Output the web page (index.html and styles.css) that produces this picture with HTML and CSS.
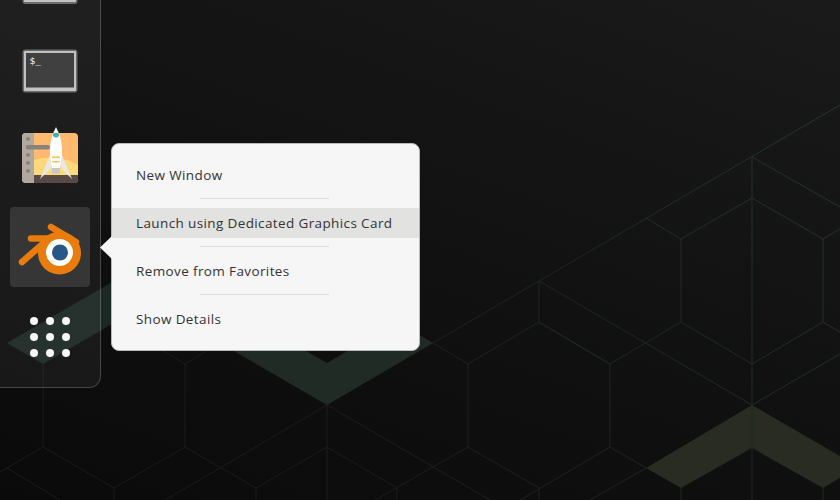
FILE: index.html
```html
<!DOCTYPE html>
<html lang="en">
<head>
  <meta charset="UTF-8" />
  <title>Desktop</title>
  <link rel="stylesheet" href="styles.css">
</head>
<body>
  <!-- Wallpaper -->
  <svg class="wallpaper" width="840" height="500" viewBox="0 0 840 500">
    <defs>
      <linearGradient id="hexLine" gradientUnits="userSpaceOnUse" x1="840" y1="100" x2="300" y2="500">
        <stop offset="0" stop-color="#223636"/>
        <stop offset="0.5" stop-color="#1c2624"/>
        <stop offset="1" stop-color="#1a1a15"/>
      </linearGradient>
    </defs>
    <polygon fill="#1c2824" points="7,343 114,281 150,302 43,364"/>
    <polygon fill="#202b26" points="327,405 433,343 397,322 327,363 256,322 220,343"/>
    <polygon fill="#282c22" points="752,405 840,456 840,478 823,488 752,448 681,488 646,468"/>
    <g class="hex-lines" stroke="url(#hexLine)">
      <path d="M433 343L840 105M646 218L681 239L752 198L823 239L840 229M752 157L840 207M752 157V500M681 239V322M823 239V322"/>
      <path d="M539 281V322M539 281L752 405M540 323L610 364L681 322L752 364L823 322L840 332M752 405L840 354M468 364L539 322L610 364M433 343L468 364V447"/>
      <path d="M610 364V447L646 468L590 500M610 447L520 500M468 447L539 488V500M681 488V500M823 488V500"/>
      <path d="M327 405V500M327 405L220 468L165 500M327 405L490 500M327 447L256 488V500M327 447L397 488V500M468 447L375 500"/>
      <path d="M150 343L185 364L220 343M185 364V447L114 488V500M185 447L256 488M43 364V447L114 488M43 447L0 472M7 468L60 500"/>
    </g>
  </svg>

  <div class="desktop">
    <!-- Dock -->
    <div class="dock">
      <div class="slot">
        <svg class="icon" viewBox="10 -57 80 80">
          <rect x="22.5" y="-40" width="55" height="44" rx="3" fill="#6c6c6c"/>
          <rect x="24" y="-38" width="52" height="40" rx="1" fill="#c2c2c2"/>
        </svg>
      </div>
      <div class="slot">
        <svg class="icon" viewBox="10 31 80 80">
          <rect x="22.5" y="49.5" width="55" height="43" rx="3" fill="#6c6c6c"/>
          <rect x="24" y="51" width="52" height="40" rx="1" fill="#c2c2c2"/>
          <rect x="26" y="53" width="48" height="34.5" fill="#404040"/>
          <text class="prompt" x="29.5" y="64">$_</text>
        </svg>
      </div>
      <div class="slot">
        <svg class="icon" viewBox="10 119 80 80">
          <rect x="22" y="133" width="56" height="50" rx="4" fill="#feba6f"/>
          <path d="M34 160Q44 157 56 158T78 165V175H34Z" fill="#fdd97b"/>
          <path d="M34 175H78V179Q78 183 74 183H34Z" fill="#5a4a45"/>
          <path d="M34 133H26Q22 133 22 137V179Q22 183 26 183H34Z" fill="#b1a89f"/>
          <rect x="26" y="145" width="24" height="4.5" rx="2" fill="#8b817c"/>
          <g fill="#8b817c">
            <circle cx="28" cy="139" r="2"/>
            <circle cx="28" cy="147" r="2"/>
            <circle cx="28" cy="155" r="2"/>
            <circle cx="28" cy="163" r="2"/>
            <circle cx="28" cy="171" r="2"/>
          </g>
          <path d="M50 155L40 179L51 168ZM62 155L72 179L61 168Z" fill="#e9e7e4"/>
          <rect x="52" y="168" width="8" height="5.5" fill="#c9c7c4"/>
          <path d="M56 127Q50 138 50 151Q50 161 52 168H60Q62 161 62 151Q62 138 56 127Z" fill="#fff"/>
          <path d="M53.4 133H58.6L59 136Q56 139 53 136Z" fill="#3fb1bd"/>
          <path d="M52 156.5H60V158H52ZM52.5 161H59.5V162.500H52.500Z" fill="#f3c04f"/>
        </svg>
      </div>
      <div class="slot slot-active">
        <svg class="icon" viewBox="10 207 80 80">
          <g fill="none" stroke="#ea7c0e" stroke-width="6.500" stroke-linecap="round">
            <path d="M51 227L76 242"/>
            <path d="M31 238.500H62"/>
            <path d="M22 262L46 241"/>
          </g>
          <circle cx="59.500" cy="253" r="21.500" fill="#ea7c0e"/>
          <circle cx="59.500" cy="252.500" r="13.500" fill="#fff"/>
          <circle cx="60" cy="252.500" r="8" fill="#265787"/>
        </svg>
      </div>
      <div class="slot slot-apps">
        <div class="app-grid">
          <span></span><span></span><span></span>
          <span></span><span></span><span></span>
          <span></span><span></span><span></span>
        </div>
      </div>
    </div>

    <!-- Context menu -->
    <div class="menu">
      <div class="menu-arrow"></div>
      <div class="menu-item">New Window</div>
      <div class="menu-sep"></div>
      <div class="menu-item hover">Launch using Dedicated Graphics Card</div>
      <div class="menu-sep"></div>
      <div class="menu-item">Remove from Favorites</div>
      <div class="menu-sep"></div>
      <div class="menu-item">Show Details</div>
    </div>
  </div>
</body>
</html>
```

FILE: styles.css
```css
* { margin: 0; padding: 0; box-sizing: border-box; }

body, html {
  width: 840px;
  height: 500px;
  overflow: hidden;
  font-family: 'Open Sans', 'Noto Sans', sans-serif;
  background: linear-gradient(20deg, #0a0a0a, #111111 50%, #1a1a1a);
}

.wallpaper {
  position: absolute;
  left: 0;
  top: 0;
}

.hex-lines {
  fill: none;
  stroke-width: 1;
}

.desktop {
  position: relative;
  display: flex;
  align-items: flex-start;
  height: 500px;
}

.dock {
  display: flex;
  flex-direction: column;
  gap: 8px;
  width: 101px;
  margin-top: -65px;
  padding: 8px 10px 10px;
  background: rgba(255,255,255,0.05);
  border: 1px solid rgba(255,255,255,0.2);
  border-left: none;
  border-top: none;
  border-radius: 0 0 12px 0;
}

.slot {
  display: flex;
  justify-content: center;
  align-items: center;
  width: 80px;
  height: 80px;
  border-radius: 4px;
}

.slot-active {
  background-color: #363636;
}

.slot-apps {
  margin-top: 2px;
}

.icon {
  display: block;
  width: 80px;
  height: 80px;
}

.prompt {
  font-family: 'DejaVu Sans Mono', monospace;
  font-size: 9.5px;
  fill: #ffffff;
}

.app-grid {
  display: grid;
  grid-template-columns: repeat(3, 8px);
  gap: 8px;
}

.app-grid span {
  width: 8px;
  height: 8px;
  border-radius: 50%;
  background-color: #f6f6f6;
}

.menu {
  position: relative;
  width: 309px;
  margin: 143px 0 0 10px;
  padding: 16px 0;
  background-color: #f6f6f6;
  border: 1px solid #b9b9b9;
  border-radius: 8px;
}

.menu-arrow {
  position: absolute;
  left: -12px;
  top: 92px;
  width: 12px;
  height: 23px;
  background-color: #f6f6f6;
  clip-path: polygon(100% 0, 0 50%, 100% 100%);
}

.menu-item {
  height: 30px;
  padding-left: 24px;
  font-size: 13.5px;
  line-height: 30px;
  letter-spacing: 0.38px;
  color: #333333;
  white-space: nowrap;
}

.menu-item.hover {
  background-color: #e2e2e0;
}

.menu-sep {
  width: 129px;
  height: 1px;
  margin: 8px 0 9px 88px;
  background-color: #dcdcdc;
}
```
